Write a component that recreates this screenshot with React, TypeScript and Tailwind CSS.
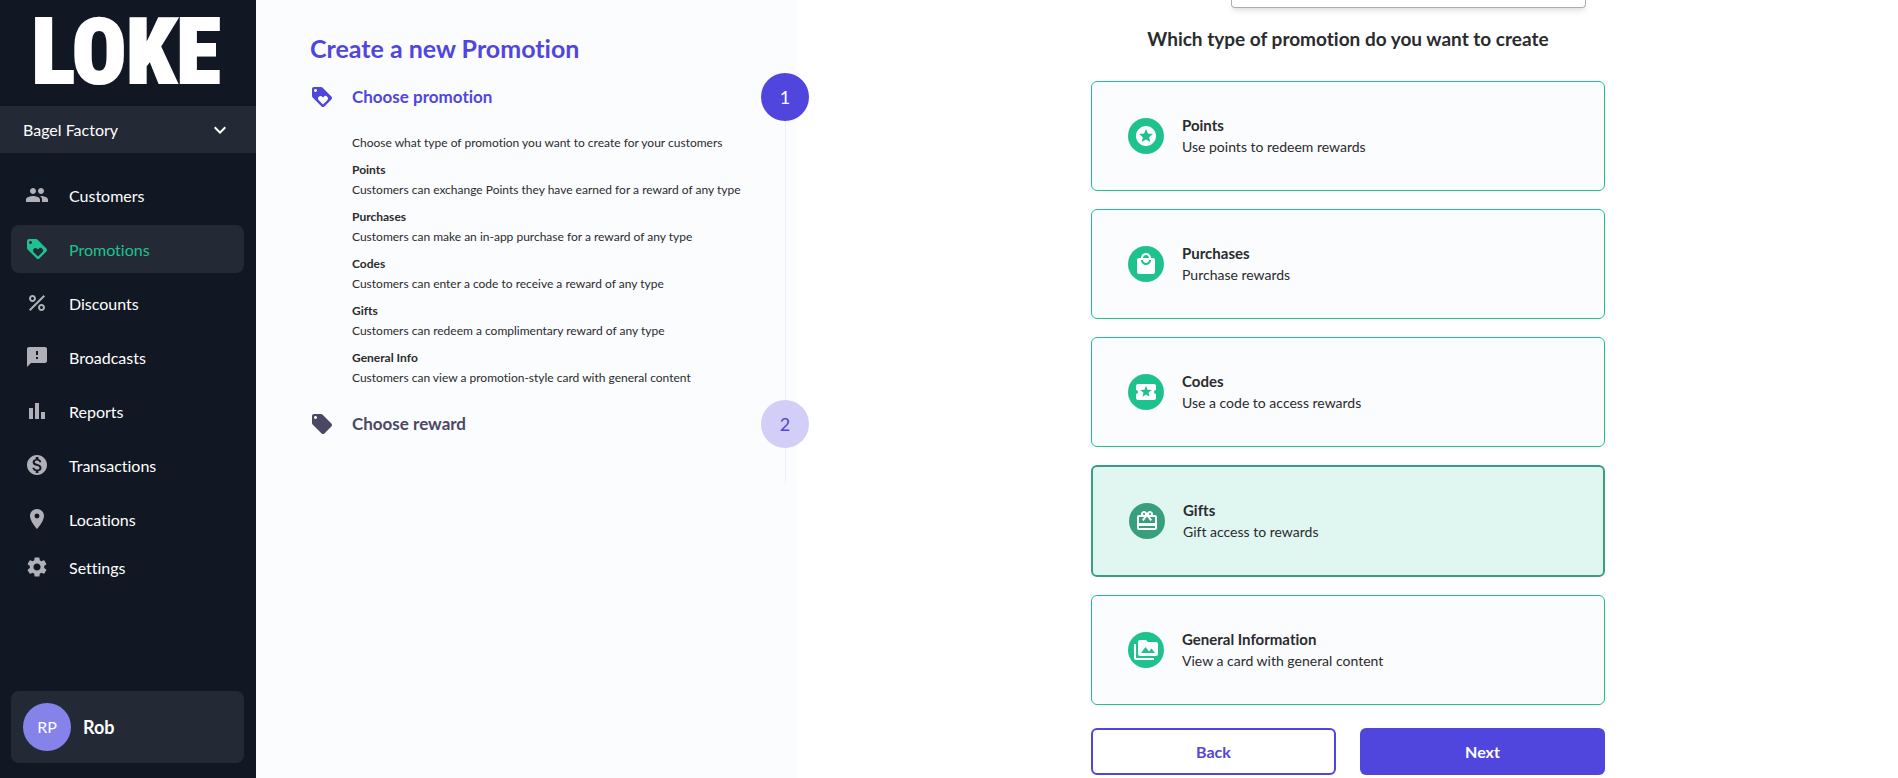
import React, { useState } from "react";
import type { IconType } from "react-icons";
import {
  MdBarChart,
  MdCardGiftcard,
  MdExpandMore,
  MdFeedback,
  MdLocalActivity,
  MdLocalMall,
  MdLocalOffer,
  MdLocationOn,
  MdLoyalty,
  MdMonetizationOn,
  MdPeople,
  MdPercent,
  MdPermMedia,
  MdSettings,
  MdStars,
} from "react-icons/md";

type NavItem = { label: string; icon: IconType; active?: boolean };

const navItems: NavItem[] = [
  { label: "Customers", icon: MdPeople },
  { label: "Promotions", icon: MdLoyalty, active: true },
  { label: "Discounts", icon: MdPercent },
  { label: "Broadcasts", icon: MdFeedback },
  { label: "Reports", icon: MdBarChart },
  { label: "Transactions", icon: MdMonetizationOn },
  { label: "Locations", icon: MdLocationOn },
];

const help = [
  { title: "Points", text: "Customers can exchange Points they have earned for a reward of any type" },
  { title: "Purchases", text: "Customers can make an in-app purchase for a reward of any type" },
  { title: "Codes", text: "Customers can enter a code to receive a reward of any type" },
  { title: "Gifts", text: "Customers can redeem a complimentary reward of any type" },
  { title: "General Info", text: "Customers can view a promotion-style card with general content" },
];

const promotionTypes: { title: string; text: string; icon: IconType }[] = [
  { title: "Points", text: "Use points to redeem rewards", icon: MdStars },
  { title: "Purchases", text: "Purchase rewards", icon: MdLocalMall },
  { title: "Codes", text: "Use a code to access rewards", icon: MdLocalActivity },
  { title: "Gifts", text: "Gift access to rewards", icon: MdCardGiftcard },
  { title: "General Information", text: "View a card with general content", icon: MdPermMedia },
];

const NavLink = ({ label, icon: Icon, active }: NavItem) => (
  <a
    href="#"
    className={`flex h-12 items-center gap-5 rounded-lg px-3.5 text-base ${
      active ? "bg-[#232a36] text-[#1fc28f]" : "text-white"
    }`}
  >
    <Icon className={`size-6 ${active ? "" : "text-[#b0b1b8]"}`} />
    <span className="pt-0.5">{label}</span>
  </a>
);

const Sidebar = () => (
  <aside className="sticky top-0 flex h-screen w-64 shrink-0 flex-col bg-[#111823]">
    {/* Logo */}
    <div className="flex h-[106px] items-center justify-center pr-1 font-['Roboto_Condensed','Liberation_Sans_Narrow','Liberation_Sans',sans-serif] text-[90px] leading-[106px] font-black text-white [-webkit-text-stroke:2px_white]">
      LOKE
    </div>

    {/* Store switcher */}
    <div className="flex h-[47px] items-center bg-[#232a36] pr-6 pl-[23px] text-white">
      <select aria-label="Store" className="flex-1 appearance-none bg-transparent text-base">
        <option>Bagel Factory</option>
      </select>
      <MdExpandMore className="pointer-events-none size-6" />
    </div>

    <nav className="flex flex-col pt-[18px] pr-3 pl-[11px]">
      <div className="flex flex-col gap-1.5">
        {navItems.map((item) => (
          <NavLink key={item.label} {...item} />
        ))}
      </div>
      <NavLink label="Settings" icon={MdSettings} />
    </nav>

    {/* Signed in user */}
    <button className="mt-auto mr-3 mb-[15px] ml-[11px] flex items-center gap-3 rounded-lg bg-[#232a36] p-3 text-white">
      <span className="flex size-12 items-center justify-center rounded-full bg-[#8583ea] text-base">RP</span>
      <span className="text-lg font-bold">Rob</span>
    </button>
  </aside>
);

const Steps = () => (
  <section className="w-[542px] shrink-0 bg-[#fbfcfe] pt-8 pl-[54px]">
    <h1 className="text-[25px] leading-8 font-bold text-[#5046de]">Create a new Promotion</h1>

    {/* The numbers straddle the right edge of the panel */}
    <ol className="-mr-[11px] mt-[9px]">
      <li>
        <div className="flex items-center">
          <MdLoyalty className="size-6 text-[#5046de]" />
          <h2 className="ml-[18px] flex-1 text-[17px] font-bold text-[#5046de]">Choose promotion</h2>
          <span className="flex size-12 items-center justify-center rounded-full bg-[#5046de] text-lg text-white">
            1
          </span>
        </div>
        <div className="mr-[23px] ml-[42px] h-[279px] border-r border-[#eeeefb] pt-3 text-xs leading-5 text-[#2a2b2e]">
          <p>Choose what type of promotion you want to create for your customers</p>
          <dl>
            {help.map((entry) => (
              <div key={entry.title} className="pt-[7px]">
                <dt className="font-bold">{entry.title}</dt>
                <dd>{entry.text}</dd>
              </div>
            ))}
          </dl>
        </div>
      </li>
      <li>
        <div className="flex items-center">
          <MdLocalOffer className="size-6 text-[#4b4866]" />
          <h2 className="ml-[18px] flex-1 text-[17px] font-bold text-[#4b4866]">Choose reward</h2>
          <span className="flex size-12 items-center justify-center rounded-full bg-[#d3cef8] text-lg text-[#5046de]">
            2
          </span>
        </div>
        <div className="mr-[23px] h-[35px] border-r border-[#eeeefb]" />
      </li>
    </ol>
  </section>
);

const App = () => {
  const [selected, setSelected] = useState("Gifts");

  return (
    <div className="flex min-h-screen bg-white font-['Lato',sans-serif] text-[#2a2b2e] [font-variant-ligatures:none]">
      <Sidebar />
      <Steps />

      <main className="flex flex-1 justify-center">
        <div className="w-full max-w-[514px]">
          <div className="mr-[19px] ml-auto h-2 w-[355px] rounded-b border border-t-0 border-[#a9aeb1] shadow-md" />
          <h2 className="mt-[17px] text-center text-[19px] leading-7 font-bold">
            Which type of promotion do you want to create
          </h2>

          <div className="mt-7 flex flex-col gap-[18px]">
            {promotionTypes.map(({ title, text, icon: Icon }) => {
              const active = title === selected;
              return (
                <button
                  key={title}
                  aria-pressed={active}
                  onClick={() => setSelected(title)}
                  className={`flex items-center gap-[18px] rounded-md px-9 py-8 text-left ${
                    active ? "border-2 border-[#389f7d] bg-[#e0f6f0]" : "border border-[#1fc28f] bg-[#fbfcfe]"
                  }`}
                >
                  <span
                    className={`flex size-9 shrink-0 items-center justify-center rounded-full text-white ${
                      active ? "bg-[#389f7d]" : "bg-[#1fc28f]"
                    }`}
                  >
                    <Icon className="size-6" />
                  </span>
                  <span className="flex flex-col text-sm leading-[22px]">
                    <span className="text-[15px] leading-[22px] font-bold">{title}</span>
                    <span>{text}</span>
                  </span>
                </button>
              );
            })}
          </div>

          <div className="mt-[23px] grid grid-cols-2 gap-6 text-base font-bold">
            <button className="h-[47px] rounded-md border-2 border-[#5046de] text-[#5046de]">Back</button>
            <button className="h-[47px] rounded-md bg-[#5046de] text-white">Next</button>
          </div>
        </div>
      </main>
    </div>
  );
};

export default App;
